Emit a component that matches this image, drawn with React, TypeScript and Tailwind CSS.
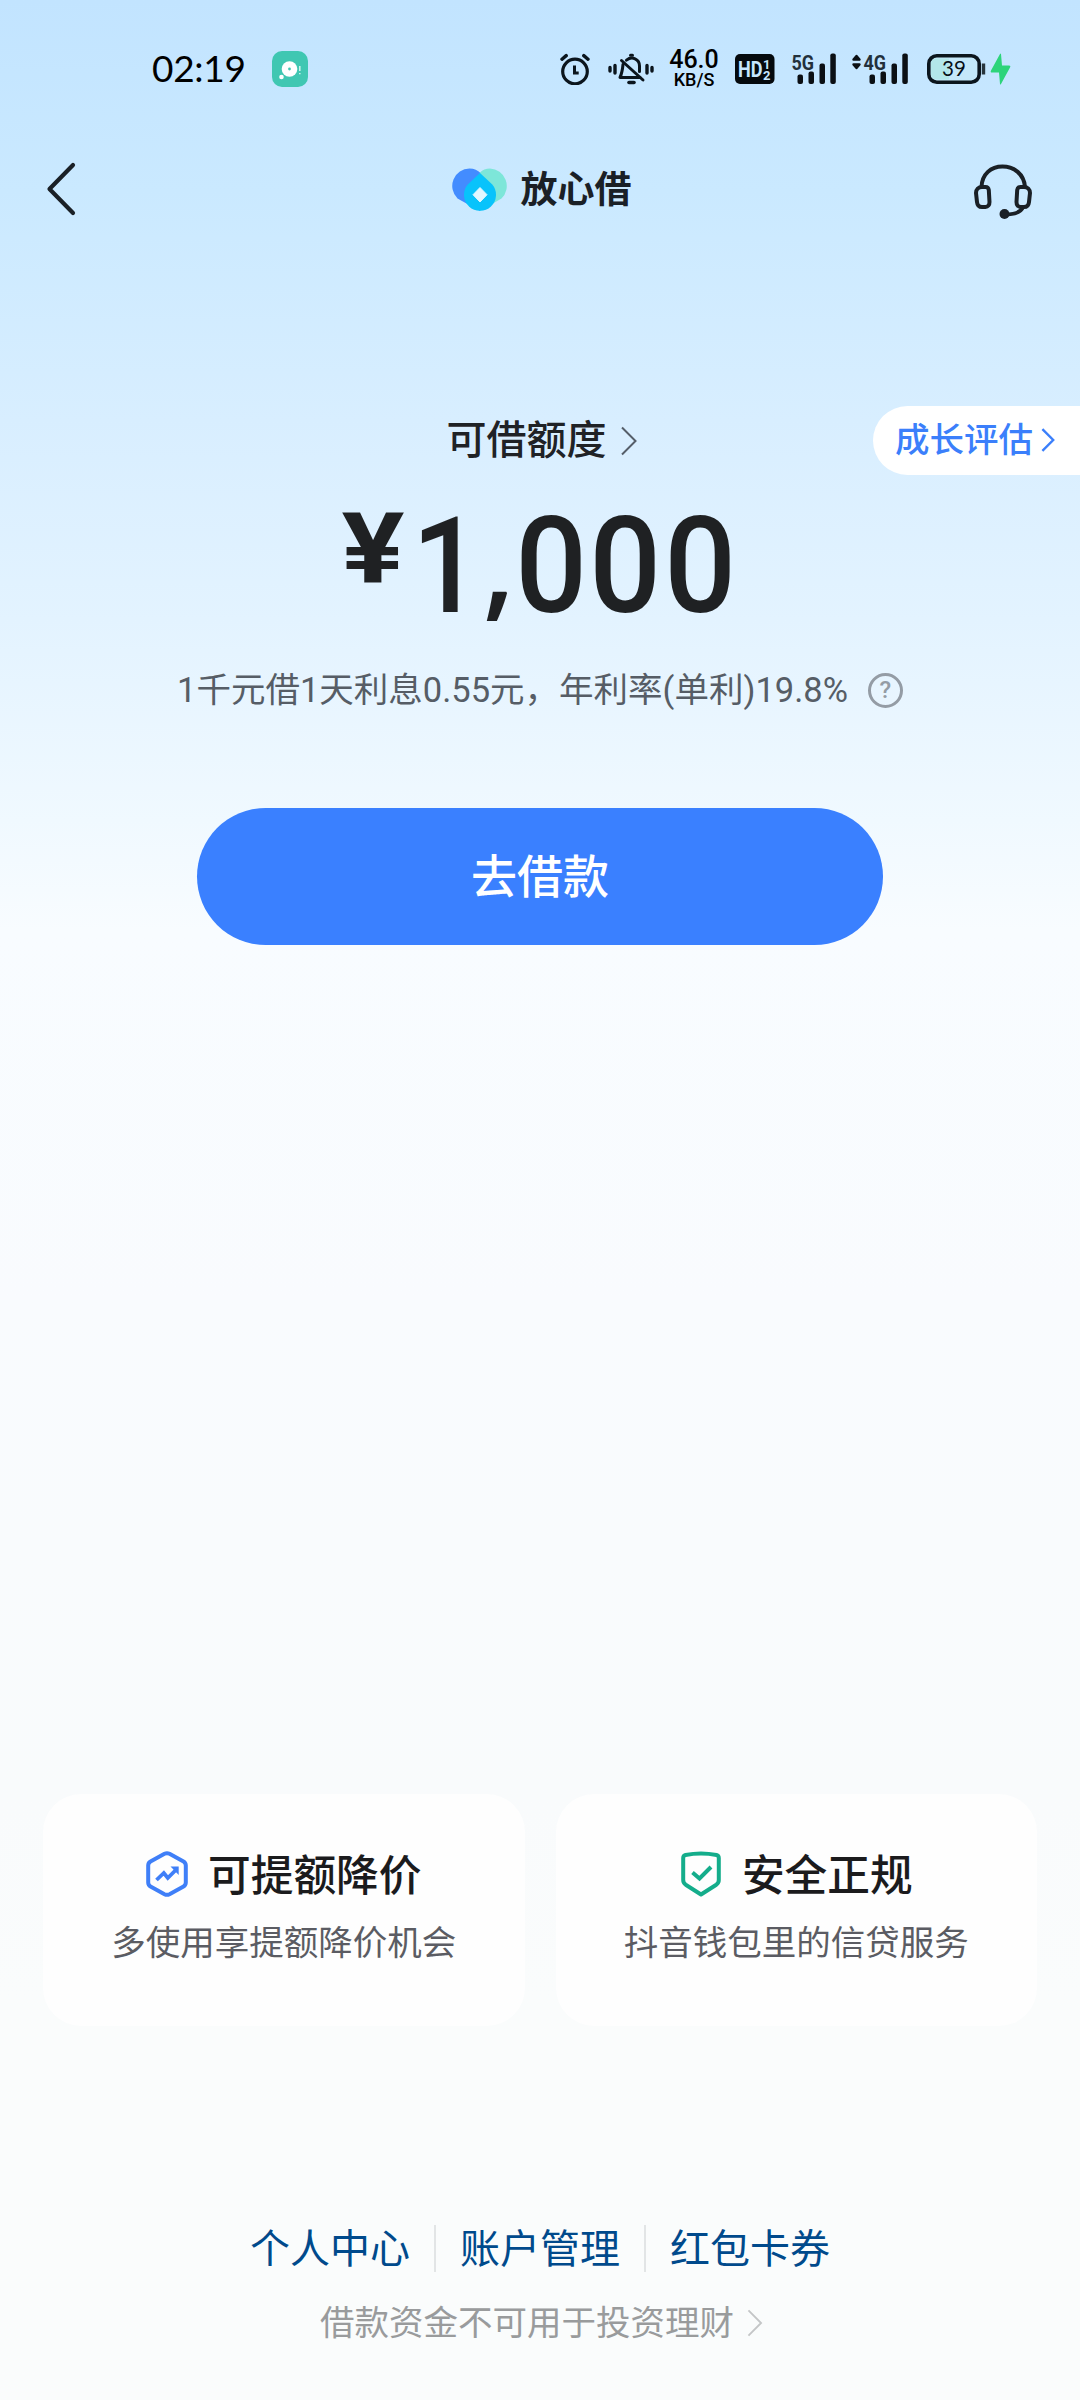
import type { ReactNode } from "react";

const links = ["个人中心", "账户管理", "红包卡券"];

function AlarmIcon() {
  return (
    <svg width="30" height="32" viewBox="0 0 30 32" fill="none" stroke="#0b151d" strokeLinecap="round">
      <circle cx="15" cy="18.5" r="12.3" strokeWidth="3.2" />
      <path d="M2 6.2 6.2 2.6M28 6.2 23.8 2.6" strokeWidth="3.4" />
      <path d="M14.5 12.5v7.6h4.2" strokeWidth="3" strokeLinecap="butt" />
    </svg>
  );
}

function MuteIcon() {
  return (
    <svg width="46" height="32" viewBox="0 0 46 32" fill="none" stroke="#0b151d" strokeWidth="3" strokeLinecap="round">
      <path d="M2 14.5v3.5M7 12.5v7.5M44 14.5v3.5M39 12.5v7.5" strokeWidth="3.4" />
      <path d="M18.5 7.2C24 2.8 31.5 6 31.5 13v5.5M15 11.5c-.6 6.5-.9 8.5-3 13h20" strokeLinejoin="round" />
      <path d="M13.5 7.5 35 27M22.5 2.2h2" />
      <path d="M21 29.5h5" strokeWidth="3.6" />
    </svg>
  );
}

function Signal({ label, updown }: { label: string; updown?: boolean }) {
  return (
    <svg width="58" height="34" viewBox="0 0 58 34" fill="#0b0f14">
      {updown && (
        <path
          d="M3.5 7.5 6.5 4l3 3.5ZM3.5 12.5l3 3.5 3-3.5Z"
          stroke="#0b0f14"
          strokeWidth="2.4"
          strokeLinejoin="round"
        />
      )}
      <text
        x="13.5"
        y="18"
        textLength="22.5"
        lengthAdjust="spacingAndGlyphs"
        className="font-['Roboto',sans-serif] text-[21px] font-bold"
        fill="#22303b"
      >
        {label}
      </text>
      <rect x="19.5" y="22.5" width="5.5" height="9.5" rx="2" />
      <rect x="30.5" y="19.5" width="5.5" height="12.5" rx="2" />
      <rect x="41.5" y="11.5" width="5.5" height="20.5" rx="2" />
      <rect x="52.3" y="1.5" width="5.5" height="30.5" rx="2" />
    </svg>
  );
}

function StatusBar() {
  return (
    <div className="flex h-[138px] items-center pl-[152px] text-black">
      <span className="w-[95px] pb-[3px] font-['Lato',sans-serif] text-[37px] leading-none tracking-[-0.3px]">02:19</span>
      <svg className="ml-[25px]" width="36" height="36" viewBox="0 0 36 36">
        <rect width="36" height="36" rx="10" fill="#40c7b2" />
        <circle cx="17.5" cy="18" r="7.8" fill="#fff" />
        <circle cx="17.5" cy="18" r="1.4" fill="#40c7b2" />
        <circle cx="9.5" cy="26" r="2.3" fill="#fff" />
        <path d="M27.8 15v5M27.8 22v1.2" stroke="#d4f3ee" strokeWidth="1.5" />
      </svg>
      <div className="ml-[252px] flex items-center">
        <AlarmIcon />
        <div className="ml-[18px]">
          <MuteIcon />
        </div>
        <div className="ml-[14px] flex w-[52px] flex-col items-center pt-px font-['Roboto',sans-serif] font-medium">
          <span className="text-[25px] leading-[18px]">46.0</span>
          <span className="mt-[2px] text-[18px] leading-[17px]">KB/S</span>
        </div>
        <svg className="ml-[15px]" width="40" height="30" viewBox="0 0 40 30">
          <rect width="39.5" height="30" rx="5" fill="#050a0e" />
          <g className="font-['Roboto',sans-serif] font-bold" fill="#c6e7ff">
            <text x="3" y="22.5" textLength="24.5" lengthAdjust="spacingAndGlyphs" className="text-[22px]">
              HD
            </text>
            <text x="28" y="14.5" className="text-[13px]">1</text>
            <text x="28" y="26" className="text-[13px]">2</text>
          </g>
        </svg>
        <div className="ml-[3px]">
          <Signal label="5G" />
        </div>
        <div className="ml-[14px]">
          <Signal label="4G" updown />
        </div>
        <svg className="ml-[19px]" width="60" height="30" viewBox="0 0 60 30">
          <rect x="1.8" y="1.8" width="50.4" height="26.4" rx="8" fill="#c4e8fa" stroke="#0b151d" strokeWidth="3.6" />
          <path d="M9 4.5h13v21H9a5 5 0 0 1-5-5v-11a5 5 0 0 1 5-5Z" fill="#b3e7ea" />
          <path d="M56.5 9.5v11" stroke="#27343c" strokeWidth="3.4" />
          <text x="27" y="22" textAnchor="middle" className="font-['Lato',sans-serif] text-[20.5px]" fill="#071018">
            39
          </text>
        </svg>
        <svg className="ml-[3px]" width="21" height="32" viewBox="0 0 21 32">
          <path d="M10 1 1 17.5Q0 19.5 2 19.5h7L10 31q.5 1 1 0l9-16.5q1-2-1-2h-7L11 1q-.5-1-1 0Z" fill="#2dd47a" />
        </svg>
      </div>
    </div>
  );
}

function Chevron({ className, strokeWidth = 2 }: { className: string; strokeWidth?: number }) {
  return (
    <svg className={className} viewBox="0 0 16 30" fill="none" stroke="currentColor" strokeWidth={strokeWidth}>
      <path d="M1 1.5 14.5 15 1 28.5" />
    </svg>
  );
}

function Header() {
  return (
    <header className="flex h-[102px] items-center justify-between pr-[48px] pl-[46px] text-[#1a2026]">
      <svg width="58" height="54" viewBox="0 0 58 54" fill="none" stroke="currentColor" strokeWidth="4.2" strokeLinecap="round" strokeLinejoin="round">
        <path d="M27 3 3.5 27 27 51" />
      </svg>
      <div className="flex items-center gap-[13px] pt-[2px] pl-[5px]">
        <svg width="56" height="44" viewBox="0 0 56 44">
          <path d="M28 43 5.5 30.5A17.5 17.5 0 0 1 17.5 0.5c4.5 0 8.5 2 11 4.5Z" fill="#438cff" />
          <path d="M28 43 49.5 30.5A17.5 17.5 0 0 0 38 0.5c-4 0-7.5 1.5-10 4L26 20Z" fill="#7de6d9" />
          <path d="M28 5 40.3 16.5A16 16 0 1 1 15.7 16.5Z" fill="#08c3fb" />
          <path d="M28 19.5 35 26.7 28 34 21 26.7Z" fill="#e2f7ff" stroke="#e2f7ff" strokeLinejoin="round" />
        </svg>
        <h1 className="pt-[2px] text-[37px] leading-[46px] font-bold">放心借</h1>
      </div>
      <svg className="mt-[5px]" width="58" height="56" viewBox="0 0 58 56" fill="none" stroke="currentColor" strokeWidth="4">
        <path d="M7.5 23C8 10 17 2.5 28.5 2.5S50 10 51 23" />
        <path d="M8 23h3.5c2 0 3 1 3.3 3l.7 12c0 3-1.5 5-4 5H8C5 43 3.3 41 3 38l-1-9c0-3.5 2.5-6 6-6Z" />
        <path d="M50 23h-3.5c-2 0-3 1-3.3 3l-.7 12c0 3 1.5 5 4 5H50c3 0 4.7-2 5-5l1-9c0-3.5-2.5-6-6-6Z" />
        <path d="M49 43c-2 5-8 7.5-18 7.5" />
        <circle cx="30.5" cy="50" r="5" fill="currentColor" stroke="none" />
      </svg>
    </header>
  );
}

function Amount() {
  return (
    <div className="mt-[25px] flex h-[134px] items-start justify-center font-['Roboto',sans-serif] text-[133px] leading-[134px] font-medium text-[#1f2123]">
      <span className="mr-[6px] flex w-[60px] scale-x-[1.2] justify-center text-[98px] leading-[100px] font-bold">¥</span>
      <span className="flex w-[75px] scale-x-[0.92] justify-center">1</span>
      <span className="-mt-[7px] flex w-[30px] justify-center font-['Open_Sans',sans-serif] text-[120px] font-semibold">,</span>
      {[0, 1, 2].map((i) => (
        <span key={i} className="flex w-[74.5px] scale-x-[0.95] justify-center">
          0
        </span>
      ))}
    </div>
  );
}

function Hero() {
  return (
    <section className="flex flex-col items-center pt-[166px]">
      {/* Side label is balanced by an equal empty column so the limit stays centred */}
      <div className="grid h-[69px] w-full grid-cols-[207px_1fr_207px] items-center">
        <span />
        <div className="flex items-center justify-center pl-[3px] text-[#1f2226]">
          <span className="text-[40px] leading-[60px] font-medium">可借额度</span>
          <Chevron className="ml-[14px] h-[30px] w-[16px] text-[#555e69]" />
        </div>
        <div className="flex h-[69px] items-center rounded-l-full bg-white pb-[2px] pl-[22px] text-[#3b7ffb]">
          <span className="text-[34.5px] leading-[52px] font-medium">成长评估</span>
          <Chevron className="ml-[8px] h-[24px] w-[14px]" strokeWidth={3} />
        </div>
      </div>
      <Amount />
      <div className="mt-[29px] flex h-[54px] items-center text-[#565d66]">
        <p className="text-[34.5px] leading-[54px]">1千元借1天利息0.55元，年利率(单利)19.8%</p>
        <span className="ml-[20px] flex size-[35px] items-center justify-center rounded-full border-[3px] border-[#949ca5] text-[24px] leading-none font-medium text-[#949ca5]">
          ?
        </span>
      </div>
      <button className="mt-[91px] h-[137px] w-[686px] rounded-full bg-[#3a80ff] pt-[2px] text-[46px] font-medium text-white">
        去借款
      </button>
    </section>
  );
}

function FeatureCard({ icon, title, desc }: { icon: ReactNode; title: string; desc: string }) {
  return (
    <div className="flex h-[232px] flex-1 flex-col items-center rounded-[38px] bg-[#fefefe] pt-[48px]">
      <div className="flex h-[64px] items-center gap-[20px]">
        {icon}
        <h2 className="pt-[3px] text-[42.7px] leading-[64px] font-medium text-[#1b1b1d]">{title}</h2>
      </div>
      <p className="mt-[12px] text-[34.5px] leading-[50px] text-[#5b5c63]">{desc}</p>
    </div>
  );
}

function Features() {
  return (
    <section className="mt-[849px] flex gap-[31px] px-[43px]">
      <FeatureCard
        title="可提额降价"
        desc="多使用享提额降价机会"
        icon={
          <svg width="42" height="46" viewBox="0 0 42 46" fill="none" stroke="#3f7ff8" strokeLinejoin="round">
            <path d="M18.5 2.8q2.5-1.3 5 0l14 7.7q2.3 1.3 2.3 4v17q0 2.7-2.3 4l-14 7.7q-2.5 1.3-5 0l-14-7.7q-2.3-1.3-2.3-4v-17q0-2.7 2.3-4Z" strokeWidth="4" />
            <path d="m10.5 29 7.3-7 4 5 8-8" strokeWidth="3.8" strokeLinejoin="miter" />
            <path d="M24.5 15.5h8.2V24Z" fill="#3f7ff8" stroke="none" />
          </svg>
        }
      />
      <FeatureCard
        title="安全正规"
        desc="抖音钱包里的信贷服务"
        icon={
          <svg width="42" height="46" viewBox="0 0 42 46" fill="none" stroke="#14ad8b" strokeWidth="4">
            <path d="M5.5 4q15.5-3 31 0 2.3.6 2.3 3v22c0 2-.8 3.5-2.5 4.7L21 43.5 5.700 33.700C4 32.500 3.200 31 3.200 29V7q0-2.400 2.300-3Z" strokeLinejoin="round" />
            <path d="m12.5 21.5 7 6L31 16" />
          </svg>
        }
      />
    </section>
  );
}

function Footer() {
  return (
    <footer className="mt-[192px] flex flex-col items-center">
      <nav className="flex h-[60px] items-center">
        {links.map((link, i) => (
          <div key={link} className="flex items-center">
            {i > 0 && <span className="mx-[24px] h-[47px] w-[2px] bg-[#e2e5e6]" />}
            <a className="pt-[4px] text-[40px] leading-[60px] text-[#004a8c]">{link}</a>
          </div>
        ))}
      </nav>
      <div className="mt-[19px] flex h-[52px] items-center pl-[3px] text-[#999b9c]">
        <span className="text-[34.5px] leading-[52px]">借款资金不可用于投资理财</span>
        <Chevron className="ml-[13px] h-[28px] w-[16px] text-[#c4c6c7]" />
      </div>
    </footer>
  );
}

export default function App() {
  return (
    <main className="h-[2400px] w-[1080px] overflow-hidden bg-[linear-gradient(180deg,#c2e4ff_0px,#cae9ff_190px,#d8eeff_420px,#e3f3ff_620px,#f0f9ff_820px,#f8fcff_930px,#f9fbfe_1300px,#f9fbfc_1800px,#fafcfc_2000px)] font-['Roboto','Noto_Sans_CJK_SC',sans-serif]">
      <StatusBar />
      <Header />
      <Hero />
      <Features />
      <Footer />
    </main>
  );
}
